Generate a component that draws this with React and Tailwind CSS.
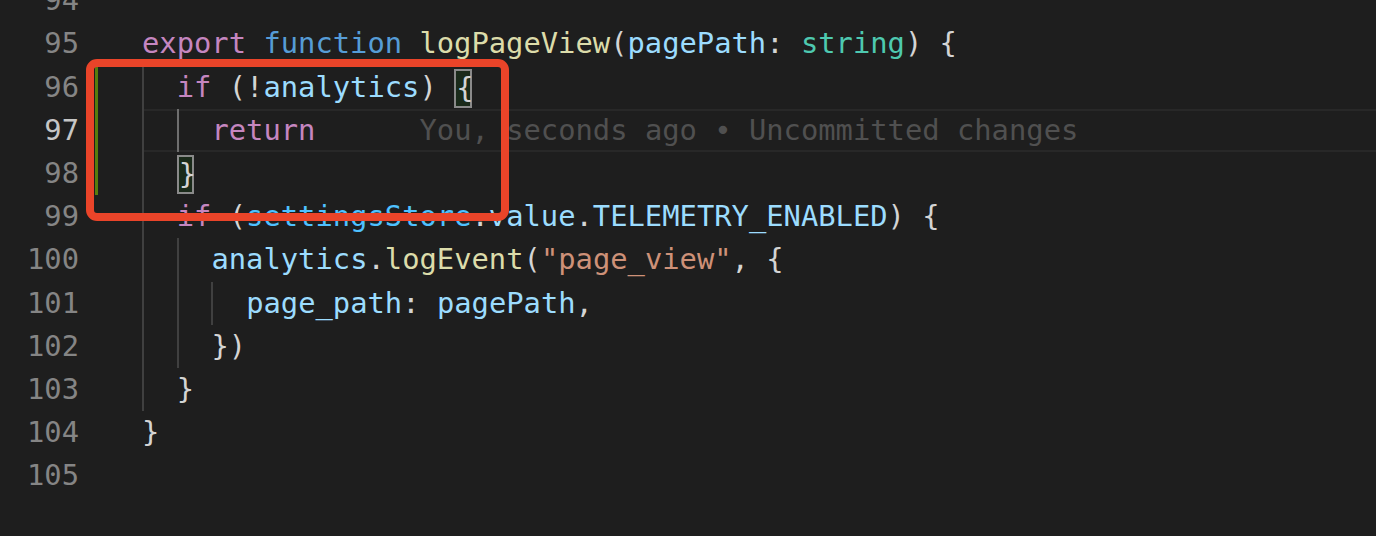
import React from 'react'

const KW = 'text-[#c586c0]'
const STORAGE = 'text-[#569cd6]'
const FN = 'text-[#dcdcaa]'
const VAR = 'text-[#9cdcfe]'
const CONST = 'text-[#4fc1ff]'
const TYPE = 'text-[#4ec9b0]'
const STR = 'text-[#ce9178]'
const P = 'text-[#d4d4d4]'

// guides: one entry per indent unit, true = active guide
const LINES = [
  { n: 94, guides: [], tokens: [] },
  {
    n: 95,
    guides: [],
    tokens: [
      ['export', KW], [' ', P], ['function', STORAGE], [' ', P], ['logPageView', FN], ['(', P],
      ['pagePath', VAR], [': ', P], ['string', TYPE], [') {', P],
    ],
  },
  {
    n: 96,
    modified: true,
    guides: [false],
    tokens: [['if', KW], [' (!', P], ['analytics', VAR], [') ', P], ['{', P, 'box']],
  },
  {
    n: 97,
    modified: true,
    current: true,
    guides: [false, true],
    tokens: [['return', KW]],
    ghost: 'You, seconds ago • Uncommitted changes',
  },
  { n: 98, modified: true, guides: [false], tokens: [['}', P, 'box']] },
  {
    n: 99,
    guides: [false],
    tokens: [
      ['if', KW], [' (', P], ['settingsStore', CONST], ['.', P], ['value', VAR], ['.', P],
      ['TELEMETRY_ENABLED', VAR], [') {', P],
    ],
  },
  {
    n: 100,
    guides: [false, false],
    tokens: [['analytics', VAR], ['.', P], ['logEvent', FN], ['(', P], ['"page_view"', STR], [', {', P]],
  },
  {
    n: 101,
    guides: [false, false, false],
    tokens: [['page_path', VAR], [': ', P], ['pagePath', VAR], [',', P]],
  },
  { n: 102, guides: [false, false], tokens: [['})', P]] },
  { n: 103, guides: [false], tokens: [['}', P]] },
  { n: 104, guides: [], tokens: [['}', P]] },
  { n: 105, guides: [], tokens: [] },
]

function Token({ text, cls, kind }) {
  if (kind === 'box') {
    return (
      <span className={`inline-block align-top mt-[3px] w-[17.36px] h-[39px] leading-[35px] border-2 border-[#8a8a8a] bg-[#1a2a1a] text-center ${cls}`}>
        {text}
      </span>
    )
  }
  return <span className={cls}>{text}</span>
}

function CodeLine({ line }) {
  return (
    <div className="flex h-[43.2px]">
      <div className="flex w-[142px] shrink-0">
        <div className={`w-[95px] pr-[16px] text-right ${line.current ? 'text-[#c6c6c6]' : 'text-[#858585]'}`}>
          {line.n}
        </div>
        <div className={`w-[3px] ${line.modified ? 'bg-[#587c0c]' : ''}`} />
      </div>
      <div
        className={`flex-1 whitespace-pre ${
          line.current ? 'shadow-[inset_0_2px_0_#282828,inset_0_-2px_0_#282828]' : ''
        }`}
      >
        {line.guides.map((active, i) => (
          <span
            key={i}
            className={`inline-block align-top w-[34.72px] h-[43.2px] border-l-2 ${
              active ? 'border-[#6e6e6e]' : 'border-[#404040]'
            }`}
          />
        ))}
        {line.tokens.map(([text, cls, kind], i) => (
          <Token key={i} text={text} cls={cls} kind={kind} />
        ))}
        {line.ghost && <span className="text-[#505050]">{'      ' + line.ghost}</span>}
      </div>
    </div>
  )
}

export default function App() {
  return (
    <div
      className="relative w-[1376px] h-[536px] overflow-hidden bg-[#1e1e1e] text-[28.8px] leading-[43.2px]"
      style={{ fontFamily: '"DejaVu Sans Mono", "Liberation Mono", monospace' }}
    >
      <div className="mt-[-20.8px]">
        {LINES.map(line => (
          <CodeLine key={line.n} line={line} />
        ))}
      </div>

      {/* annotation box */}
      <div className="absolute left-[86px] top-[59px] w-[423px] h-[162px] rounded-[11px] border-[8px] border-[#ea4429]" />
    </div>
  )
}
